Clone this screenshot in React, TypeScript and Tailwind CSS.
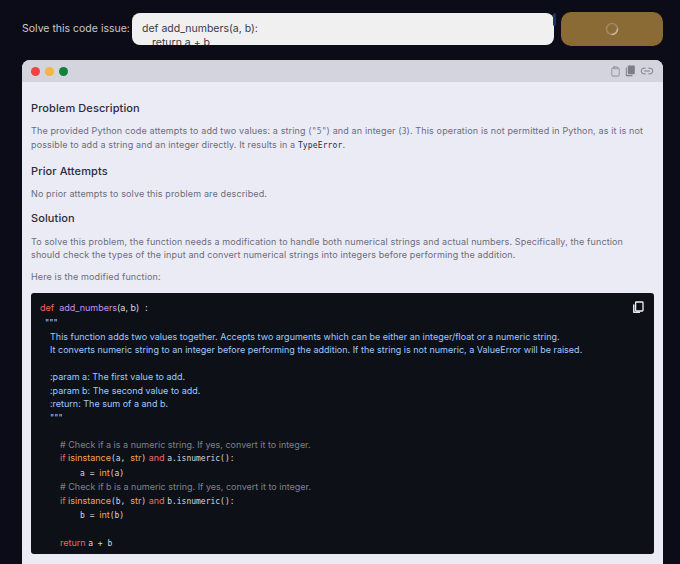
import { ReactNode } from "react";
import { Clipboard, Link2 } from "lucide-react";

const sans = "font-['Inter',sans-serif]";
const mono = "font-['DejaVu_Sans_Mono',monospace] text-[8px]";

const Heading = ({ className, children }: { className: string; children: ReactNode }) => (
  <h2 className={`text-[11px] leading-[14px] font-medium tracking-[0.1px] text-[#2b2c3b] ${className}`}>
    {children}
  </h2>
);

const Para = ({ className, children }: { className: string; children: ReactNode }) => (
  <p className={`text-[9px] leading-[13px] tracking-[0.13px] text-[#6c6d7a] whitespace-pre ${className}`}>
    {children}
  </p>
);

const Kw = ({ children }: { children: ReactNode }) => <span className="text-[#f0656a]">{children}</span>;
const Fn = ({ children }: { children: ReactNode }) => <span className="text-[#f5a458]">{children}</span>;
const Mono = ({ children }: { children: ReactNode }) => (
  <span className={`${mono} text-[#d5d9e0]`}>{children}</span>
);

const CopyIcon = () => (
  <svg width="12" height="13" viewBox="0 0 12 13" fill="none">
    <path d="M1 3.5h1.5V10.5H8V12H1.8A.8.8 0 0 1 1 11.2Z" fill="#e6e8ee" />
    <rect x="3.6" y="1" width="7.4" height="9" rx="0.8" stroke="#f2f3f7" strokeWidth="1.3" />
  </svg>
);

const PagesIcon = () => (
  <svg width="11" height="12" viewBox="0 0 11 12" fill="none">
    <path d="M0.8 2.6h1V10H7.4v1.2H1.4a.6.6 0 0 1-.6-.6Z" fill="#7c7d89" />
    <rect x="2.8" y="0.6" width="7" height="8.6" rx="0.8" fill="#7c7d89" />
  </svg>
);

const Spinner = () => (
  <svg width="14" height="14" viewBox="0 0 14 14" fill="none" className="opacity-80">
    <circle cx="7" cy="7" r="5.5" stroke="#a39274" strokeWidth="1.5" />
    <path d="M7 12.5A5.5 5.5 0 0 0 12.5 7" stroke="#cfc9bb" strokeWidth="1.5" strokeLinecap="round" />
  </svg>
);

const App = () => {
  return (
    <div className={`${sans} h-[564px] w-[680px] overflow-hidden bg-[#0b0c17]`}>
      <div className="flex items-center pt-3 pl-[22px]">
        <label className="w-[110px] text-[10.5px] text-[#c9c9d0]">Solve this code issue:</label>
        <div className="relative h-[32px] w-[422px]">
          <div className="h-[32px] overflow-hidden rounded-lg bg-[#f0f0f1] pt-[9px] pl-[10px] text-[10.5px] leading-[14px] text-[#3a3a44]">
            <div>def add_numbers(a, b):</div>
            <div className="pl-[10px]">return a + b</div>
          </div>
          <span className="absolute top-0 -right-[2px] h-[13px] w-[3px] rounded-sm bg-[#1c2f6f]" />
        </div>
        <button className="ml-[7px] flex h-[34px] w-[102px] items-center justify-center rounded-[10px] bg-[#8a6a35]">
          <Spinner />
        </button>
      </div>

      <div className="mt-[14px] ml-[22px] w-[641px] rounded-t-lg bg-[#ebebf6]">
        <div className="flex h-[22px] items-center justify-between rounded-t-lg bg-[#d4d4de] px-[9px]">
          <div className="flex gap-[5px]">
            <span className="h-[9px] w-[9px] rounded-full bg-[#ee4444]" />
            <span className="h-[9px] w-[9px] rounded-full bg-[#f5b63f]" />
            <span className="h-[9px] w-[9px] rounded-full bg-[#15803d]" />
          </div>
          <div className="flex items-center gap-[4px] text-[#7c7d89]">
            <Clipboard size={11} strokeWidth={1.6} />
            <PagesIcon />
            <Link2 size={14} strokeWidth={1.7} />
          </div>
        </div>

        <div className="px-[9px] pt-[19px]">
          <Heading className="">Problem Description</Heading>
          <Para className="mt-[9px]">
            The provided Python code attempts to add two values: a string (<span className={mono}>"5"</span>) and an integer (<span className={mono}>3</span>). This operation is not permitted in Python, as it is not{"\n"}
            possible to add a string and an integer directly. It results in a <span className={`${mono} text-[#2b2c3b]`}>TypeError</span>.
          </Para>
          <Heading className="mt-[12px]">Prior Attempts</Heading>
          <Para className="mt-[9px]">No prior attempts to solve this problem are described.</Para>
          <Heading className="mt-[11px]">Solution</Heading>
          <Para className="mt-[10px]">
            To solve this problem, the function needs a modification to handle both numerical strings and actual numbers. Specifically, the function{"\n"}
            should check the types of the input and convert numerical strings into integers before performing the addition.
          </Para>
          <Para className="mt-[9px]">Here is the modified function:</Para>

          <div className="relative mt-[10px] h-[261px] rounded-[3px] bg-[#0d1017] pt-[8px] pl-[9px] text-[9px] leading-[13.5px] whitespace-pre text-[#d5d9e0]">
            <button className="absolute top-[8px] right-[10px]">
              <CopyIcon />
            </button>
            <div>
              <Kw>def</Kw>
              {"  "}
              <span className="text-[#c792ea]">add_numbers</span>(a, b)<Mono> :</Mono>
            </div>
            <div className="pl-[5px] text-[#9ecbff]">"""</div>
            <div className="pl-[10px] pt-[0.5px] text-[#9ecbff]">
              This function adds two values together. Accepts two arguments which can be either an integer/float or a numeric string.
            </div>
            <div className="pl-[10px] text-[#9ecbff]">
              It converts numeric string to an integer before performing the addition. If the string is not numeric, a ValueError will be raised.
            </div>
            <div className="h-[13.5px]" />
            <div className="pl-[10px] text-[#9ecbff]">:param a: The first value to add.</div>
            <div className="pl-[10px] text-[#9ecbff]">:param b: The second value to add.</div>
            <div className="pl-[10px] text-[#9ecbff]">:return: The sum of a and b.</div>
            <div className="pl-[10px] text-[#9ecbff]">"""</div>
            <div className="h-[13.5px]" />
            <div className="pl-[20px] text-[#7d828b]"># Check if a is a numeric string. If yes, convert it to integer.</div>
            <div className="pl-[20px]">
              <Kw>if</Kw> <Fn>isinstance</Fn><Mono>(a, </Mono><Fn>str</Fn><Mono>)</Mono> <Kw>and</Kw> <Mono>a.isnumeric():</Mono>
            </div>
            <div className="pl-[40px]">
              <Mono>a = </Mono><Fn>int</Fn><Mono>(a)</Mono>
            </div>
            <div className="pl-[20px] text-[#7d828b]"># Check if b is a numeric string. If yes, convert it to integer.</div>
            <div className="pl-[20px]">
              <Kw>if</Kw> <Fn>isinstance</Fn><Mono>(b, </Mono><Fn>str</Fn><Mono>)</Mono> <Kw>and</Kw> <Mono>b.isnumeric():</Mono>
            </div>
            <div className="pl-[40px]">
              <Mono>b = </Mono><Fn>int</Fn><Mono>(b)</Mono>
            </div>
            <div className="h-[13.5px]" />
            <div className="pl-[20px]">
              <Kw>return</Kw> <Mono>a + b</Mono>
            </div>
          </div>
        </div>
        <div className="h-[40px]" />
      </div>
    </div>
  );
};

export default App;
